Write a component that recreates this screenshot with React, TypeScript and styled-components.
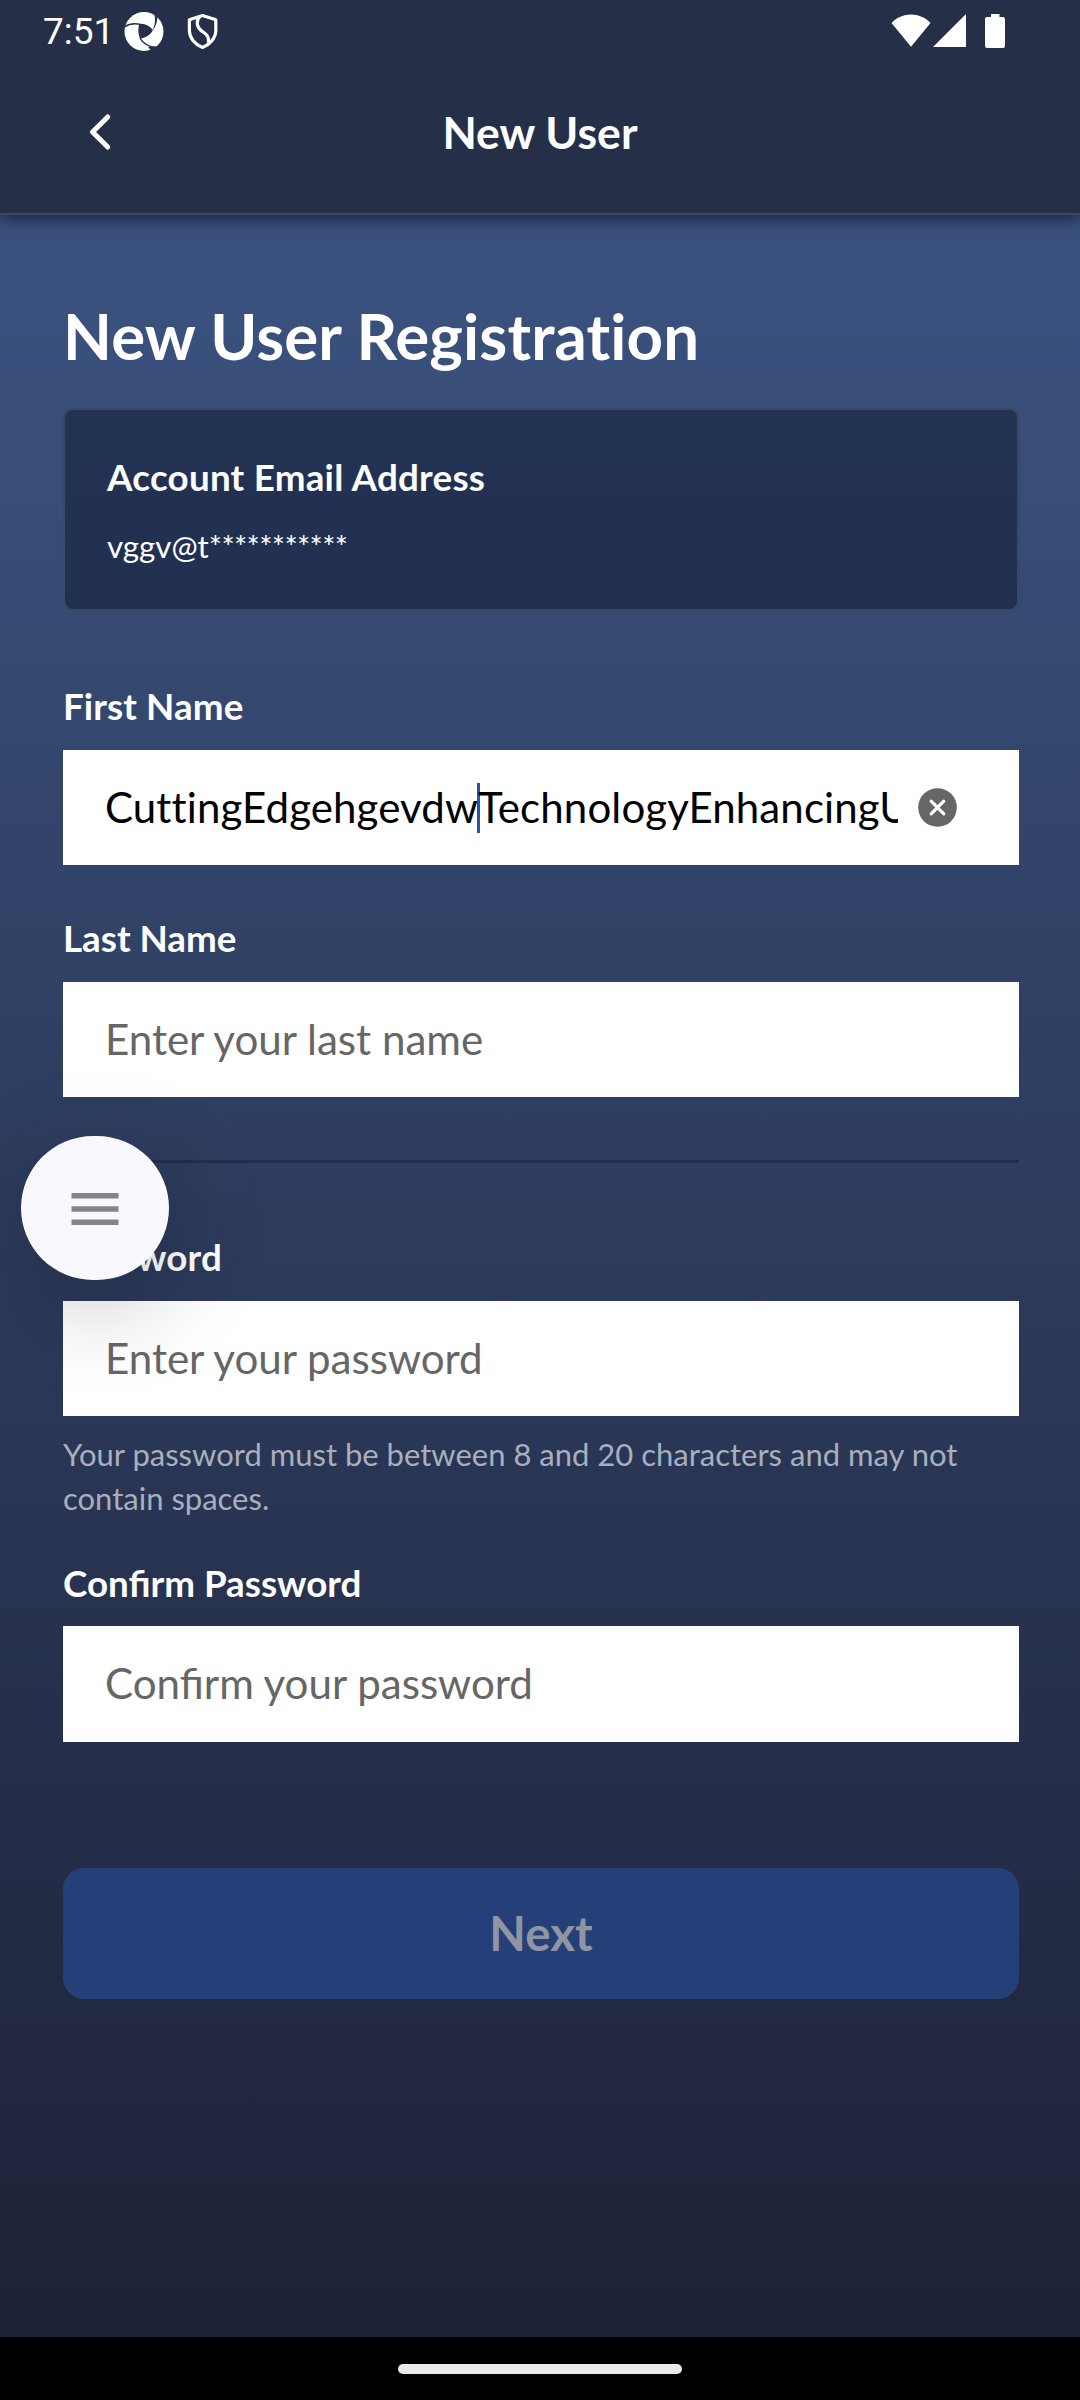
import React, { useState } from "react";
import styled, { createGlobalStyle } from "styled-components";

const GlobalStyle = createGlobalStyle`
  * { box-sizing: border-box; }
  body { margin: 0; background: #000; }
`;

const Screen = styled.div`
  display: flex;
  flex-direction: column;
  width: 1080px;
  height: 2400px;
  position: relative;
  overflow: hidden;
  font-family: Lato, "Noto Sans", sans-serif;
  color: #fff;
`;

const Top = styled.header`
  position: relative;
  z-index: 1;
  flex: none;
  height: 215px;
  background: #252f47;
  border-bottom: 2px solid #3d4760;
  box-shadow: 0 4px 14px rgba(14, 22, 42, 0.75);
`;

const StatusBar = styled.div`
  display: flex;
  align-items: center;
  height: 62px;
  padding: 0 73px 0 43px;
`;

const Clock = styled.span`
  width: 81px;
  padding-top: 1px;
  font: 400 37px/62px Roboto, sans-serif;
`;

const StatusIcon = styled.svg<{ $gap?: number }>`
  display: block;
  flex: none;
  margin-left: ${(p) => p.$gap ?? 0}px;
`;

const Spacer = styled.div`
  flex: 1;
`;

const TitleBar = styled.div`
  display: grid;
  grid-template-columns: 200px 1fr 200px;
  align-items: center;
  height: 140px;
`;

const BackButton = styled.button`
  display: flex;
  align-items: center;
  width: 100px;
  height: 100px;
  margin: 0;
  padding: 0 0 0 86px;
  border: 0;
  background: none;
`;

const Title = styled.h1`
  margin: 0;
  font-size: 44.6px;
  line-height: 54px;
  font-weight: 700;
  text-align: center;
`;

const Body = styled.main`
  flex: 1;
  display: flex;
  flex-direction: column;
  padding: 83px 61px 0 63px;
  background: linear-gradient(#3a517d 0, #3a517d 90px, #1d2136 100%);
`;

const Heading = styled.h2`
  margin: 0 0 34px;
  font-size: 63.6px;
  line-height: 76px;
  font-weight: 700;
  letter-spacing: 0.12px;
  font-variant-ligatures: none;
`;

const Card = styled.section`
  height: 203px;
  margin-bottom: 73px;
  padding: 45px 42px;
  border: 2px solid #3c4761;
  border-radius: 10px;
  background: linear-gradient(#233354, #212f50);
`;

const Label = styled.label<{ $tracking?: number }>`
  display: block;
  font-size: 36.75px;
  line-height: 44px;
  font-weight: 700;
  letter-spacing: ${(p) => (p.$tracking ? `${p.$tracking}px` : "normal")};
`;

const Email = styled.div`
  margin-top: 27px;
  font-size: 31.3px;
  line-height: 40px;
`;

const Mask = styled.span`
  letter-spacing: -0.7px;
`;

const Field = styled.div<{ $gap?: number; $after: number }>`
  display: flex;
  flex-direction: column;
  gap: ${(p) => p.$gap ?? 22}px;
  margin-bottom: ${(p) => p.$after}px;
`;

const InputBox = styled.div<{ $height?: number }>`
  display: flex;
  align-items: center;
  height: ${(p) => p.$height ?? 115}px;
  padding-left: 42px;
  background: #fff;
`;

const Value = styled.div`
  display: flex;
  align-items: center;
  width: 793px;
  overflow: hidden;
  white-space: nowrap;
  font-size: 42px;
  line-height: 58px;
  letter-spacing: 0.12px;
  font-variant-ligatures: none;
  color: #000;
`;

const Part = styled.span`
  padding-bottom: 1px;
`;

const Caret = styled.i`
  flex: none;
  width: 3px;
  height: 50px;
  margin: 0 -2px 0 -1px;
  background: #2355b0;
`;

const Input = styled.input`
  width: 100%;
  height: 58px;
  padding: 0 0 3px;
  border: 0;
  outline: 0;
  background: none;
  font-family: inherit;
  font-size: 42.1px;
  color: #000;
  &::placeholder {
    color: #666;
    opacity: 1;
  }
`;

const ClearButton = styled.button`
  display: flex;
  margin: 0 0 0 20px;
  padding: 0;
  border: 0;
  background: none;
`;

const Divider = styled.hr`
  width: 100%;
  height: 3px;
  margin: 0 0 72px;
  border: 0;
  background: #222e4b;
`;

const Hint = styled.p`
  margin: 0 0 41px;
  font-size: 31px;
  line-height: 44px;
  color: #a9afbc;
`;

const NextButton = styled.button`
  height: 131px;
  padding: 0 0 2px;
  border: 0;
  border-radius: 21px;
  background: #254078;
  color: #9095a3;
  font: 700 47.5px/58px Lato, sans-serif;
`;

const NavBar = styled.footer`
  display: flex;
  flex: none;
  justify-content: center;
  height: 63px;
  padding-top: 27px;
  background: #000;
`;

const Handle = styled.div`
  width: 284px;
  height: 10px;
  border-radius: 5px;
  background: #ebebeb;
`;

const FloatingMenu = styled.button`
  position: absolute;
  z-index: 2;
  left: 21px;
  top: 1136px;
  display: flex;
  align-items: center;
  justify-content: center;
  width: 148px;
  height: 144px;
  padding: 2px 0 0;
  border: 0;
  border-radius: 72px;
  background: #f9f8ff;
  box-shadow: 0 24px 100px rgba(0, 0, 0, 0.24);
`;

function TextField(props: {
  id: string;
  label: string;
  placeholder: string;
  after: number;
  gap?: number;
  height?: number;
  tracking?: number;
}) {
  const [value, setValue] = useState("");
  return (
    <Field $gap={props.gap} $after={props.after}>
      <Label htmlFor={props.id} $tracking={props.tracking}>
        {props.label}
      </Label>
      <InputBox $height={props.height}>
        <Input
          id={props.id}
          placeholder={props.placeholder}
          value={value}
          onChange={(e) => setValue(e.target.value)}
        />
      </InputBox>
    </Field>
  );
}

function StatusIcons() {
  return (
    <>
      <StatusIcon width="40" height="40" viewBox="0 0 40 40">
        <circle cx="20" cy="20.5" r="19.500" fill="#fff" />
        <path d="M15 13.500C20 12 26 14.500 28.800 19.500C26 24.500 21 27 16 27.500C14 23 14 18 15 13.500Z" fill="#252f47" />
        <g fill="none" stroke="#252f47" strokeWidth="1.500">
          <path d="M0.500 15.800C5 12.800 11 12.300 17 13.500" />
          <path d="M16 27C19 33 25 36 33 36.500" />
        </g>
        <path d="M28 20C31 15 32 9 30 2.500L33.500 4.500C33.500 10 32 16 28 20Z" fill="#252f47" />
        <path d="M24 36L36 35.500L28 40.500Z" fill="#252f47" />
      </StatusIcon>
      <StatusIcon $gap={23} width="32" height="38" viewBox="0 0 32 38" fill="none" stroke="#fff" strokeWidth="3.200" strokeLinejoin="round">
        <path d="M15.500 3.500L28.800 7.800V18.500C28.800 26 23 32.500 15.500 35.500C8 32.500 2.400 26 2.400 18.500V7.800Z" />
        <path d="M13 4.500C9 8 9.500 14.500 13.500 18C17.500 21.500 22.500 22.500 21.500 31" />
      </StatusIcon>
      <Spacer />
      <StatusIcon width="40" height="34" viewBox="0 0 40 34">
        <path d="M0.500 9C11 -2.500 29 -2.500 39.500 9L20 32.700Z" fill="#fff" />
      </StatusIcon>
      <StatusIcon $gap={2} width="34" height="34" viewBox="0 0 34 34">
        <path d="M33 0V33H0Z" fill="#fff" />
      </StatusIcon>
      <StatusIcon $gap={18} width="22" height="34" viewBox="0 0 22 34">
        <path d="M6 0H14.500V3H18Q20 3 20 5V32Q20 34 18 34H2Q0 34 0 32V5Q0 3 2 3H6Z" fill="#fff" />
      </StatusIcon>
    </>
  );
}

export default function App() {
  return (
    <>
      <GlobalStyle />
      <Screen>
        <Top>
          <StatusBar>
            <Clock>7:51</Clock>
            <StatusIcons />
          </StatusBar>
          <TitleBar>
            <BackButton aria-label="Back">
              <StatusIcon width="28" height="40" viewBox="0 0 28 40">
                <path d="M21.700 5L6.500 20L21.700 35" fill="none" stroke="#fff" strokeWidth="5" strokeLinecap="round" strokeLinejoin="round" />
              </StatusIcon>
            </BackButton>
            <Title>New User</Title>
          </TitleBar>
        </Top>
        <Body>
          <Heading>New User Registration</Heading>
          <Card>
            <Label as="div" $tracking={0.25}>Account Email Address</Label>
            <Email>
              vggv@t<Mask>***********</Mask>
            </Email>
          </Card>
          <Field $after={51}>
            <Label as="div" $tracking={0.1}>First Name</Label>
            <InputBox>
              <Value>
                <Part>CuttingEdgehgevdw</Part>
                <Caret />
                <Part>TechnologyEnhancingU</Part>
              </Value>
              <ClearButton aria-label="Clear">
                <svg width="39" height="39" viewBox="0 0 39 39">
                  <circle cx="19.500" cy="19.500" r="19.300" fill="#666" />
                  <path d="M13.200 13.200L25.800 25.800M25.800 13.200L13.200 25.800" stroke="#fff" strokeWidth="3.200" strokeLinecap="round" />
                </svg>
              </ClearButton>
            </InputBox>
          </Field>
          <TextField id="last" label="Last Name" placeholder="Enter your last name" after={63} />
          <Divider />
          <TextField id="password" label="Password" placeholder="Enter your password" after={16} tracking={0.2} />
          <Hint>Your password must be between 8 and 20 characters and may not contain spaces.</Hint>
          <TextField
            id="confirm"
            label="Confirm Password"
            placeholder="Confirm your password"
            gap={21}
            height={116}
            after={126}
          />
          <NextButton disabled>Next</NextButton>
        </Body>
        <NavBar>
          <Handle />
        </NavBar>
        <FloatingMenu aria-label="Menu">
          <svg width="48" height="34" viewBox="0 0 48 34">
            <path d="M0.500 3.800H47.500M0.500 17H47.500M0.500 30.200H47.500" stroke="#858489" strokeWidth="5.600" />
          </svg>
        </FloatingMenu>
      </Screen>
    </>
  );
}
